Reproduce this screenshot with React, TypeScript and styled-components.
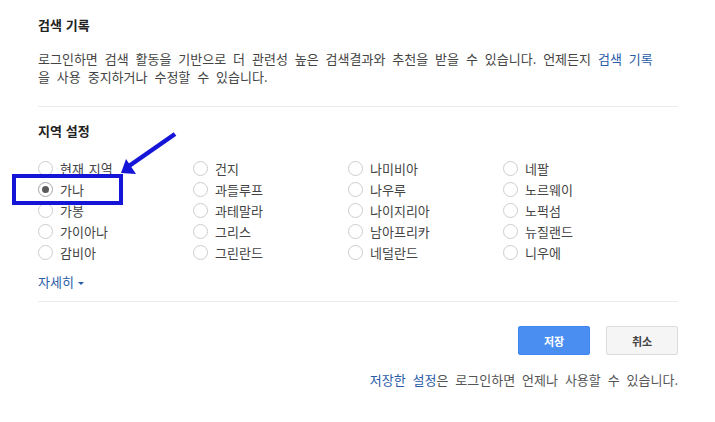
import React from "react";
import styled, { createGlobalStyle } from "styled-components";

const GlobalStyle = createGlobalStyle`
  body {
    margin: 0;
    background: #fff;
    font-family: "Noto Sans CJK KR", "Noto Sans", sans-serif;
  }
`;

const Page = styled.div`
  position: relative;
  width: 715px;
  height: 422px;
  padding: 16px 37px 0 38px;
  box-sizing: border-box;
  color: #444;
  font-size: 13px;
  word-spacing: 4px;
`;

const SectionTitle = styled.h2`
  margin: 0;
  font-size: 13px;
  line-height: 18px;
  font-weight: bold;
  color: #222;
  word-spacing: 1px;
`;

const Paragraph = styled.p`
  margin: 16px 0 0;
  max-width: 620px;
  line-height: 17.5px;
  color: #444;
`;

const Link = styled.a`
  color: #2a5ca8;
  text-decoration: none;
  cursor: pointer;
`;

const Divider = styled.hr<{ $gap: number }>`
  margin: ${(p) => p.$gap}px 0 0;
  border: 0;
  border-top: 1px solid #ebebeb;
`;

const RegionTitle = styled(SectionTitle)`
  margin-top: 15px;
`;

const RadioGrid = styled.div`
  margin-top: 18px;
  display: grid;
  grid-template-columns: repeat(4, 155px);
  grid-auto-flow: column;
  grid-template-rows: repeat(5, 21px);
`;

const RadioLabel = styled.label`
  display: flex;
  align-items: center;
  gap: 7px;
  line-height: 21px;
  color: #444;
  word-spacing: 2px;
  cursor: pointer;
`;

const RadioCircle = styled.span<{ $checked?: boolean }>`
  width: 13px;
  height: 13px;
  border-radius: 50%;
  border: 1px solid ${(p) => (p.$checked ? "#a6a6a6" : "#cdcdcd")};
  display: flex;
  align-items: center;
  justify-content: center;
  &::after {
    content: "";
    display: ${(p) => (p.$checked ? "block" : "none")};
    width: 7px;
    height: 7px;
    border-radius: 50%;
    background: #5a5a5a;
  }
`;

const MoreLink = styled(Link)`
  display: flex;
  align-items: center;
  gap: 4px;
  margin-top: 10px;
  line-height: 18px;
  width: fit-content;
`;

const Caret = styled.span`
  width: 0;
  height: 0;
  border-left: 3px solid transparent;
  border-right: 3px solid transparent;
  border-top: 3px solid #2a5ca8;
  margin-top: 2px;
`;

const ButtonRow = styled.div`
  margin-top: 24px;
  display: flex;
  justify-content: flex-end;
  gap: 16px;
`;

const Button = styled.button<{ $primary?: boolean }>`
  width: 72px;
  height: 29px;
  border-radius: 2px;
  font-family: inherit;
  font-size: 11px;
  font-weight: bold;
  border: 1px solid ${(p) => (p.$primary ? "#3f86ee" : "#dcdcdc")};
  background: ${(p) => (p.$primary ? "#4a8ef2" : "#f5f5f5")};
  color: ${(p) => (p.$primary ? "#fff" : "#444")};
  cursor: pointer;
`;

const Footer = styled.p`
  margin: 16px 0 0;
  text-align: right;
  line-height: 18px;
  color: #555;
`;

const HighlightBox = styled.div`
  position: absolute;
  left: 12px;
  top: 174px;
  width: 111px;
  height: 31px;
  box-sizing: border-box;
  border: 4px solid #1515d8;
  pointer-events: none;
`;

const ArrowSvg = styled.svg`
  position: absolute;
  left: 0;
  top: 0;
  pointer-events: none;
`;

const regions = [
  "현재 지역", "가나", "가봉", "가이아나", "감비아",
  "건지", "과들루프", "과테말라", "그리스", "그린란드",
  "나미비아", "나우루", "나이지리아", "남아프리카", "네덜란드",
  "네팔", "노르웨이", "노퍽섬", "뉴질랜드", "니우에",
];

const App: React.FC = () => {
  const selected = "가나";
  return (
    <>
      <GlobalStyle />
      <Page>
        <SectionTitle>검색 기록</SectionTitle>
        <Paragraph>
          로그인하면 검색 활동을 기반으로 더 관련성 높은 검색결과와 추천을 받을 수 있습니다. 언제든지{" "}
          <Link>검색 기록</Link>을 사용 중지하거나 수정할 수 있습니다.
        </Paragraph>
        <Divider $gap={21} />

        <RegionTitle>지역 설정</RegionTitle>
        <RadioGrid>
          {regions.map((name) => (
            <RadioLabel key={name}>
              <RadioCircle $checked={name === selected} />
              {name}
            </RadioLabel>
          ))}
        </RadioGrid>
        <MoreLink>
          자세히 <Caret />
        </MoreLink>
        <Divider $gap={10} />

        <ButtonRow>
          <Button $primary>저장</Button>
          <Button>취소</Button>
        </ButtonRow>
        <Footer>
          <Link>저장한 설정</Link>은 로그인하면 언제나 사용할 수 있습니다.
        </Footer>

        <HighlightBox />
        <ArrowSvg width="715" height="422" viewBox="0 0 715 422">
          <line x1="175" y1="134" x2="129" y2="166" stroke="#1515d8" strokeWidth="4.5" />
          <polygon points="121,173 126,159 136,174" fill="#1515d8" />
        </ArrowSvg>
      </Page>
    </>
  );
};

export default App;
